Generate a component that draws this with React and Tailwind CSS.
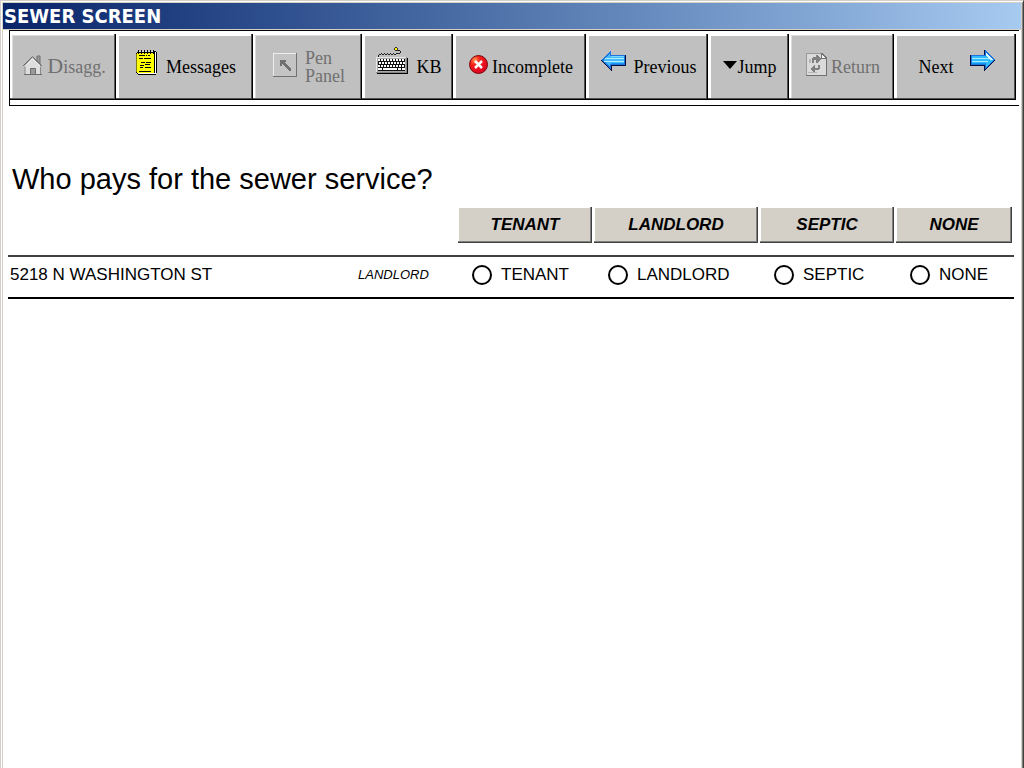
import React, { useState } from "react";

const HouseIcon = () => (
  <svg width="20" height="20" viewBox="0 0 20 20" className="mb-1">
    <path d="M14 7V1h3v9" fill="#9a9a9a" stroke="#6e6e6e" />
    <path d="M2 10L9.500 3L17.500 10V19.500H2z" fill="#dedede" stroke="#8a8a8a" />
    <path d="M0 11L9.500 1.500L19 11" fill="none" stroke="#6e6e6e" />
    <path d="M1.500 11.500L9.500 3.500L17.500 11.500" fill="none" stroke="#f4f4f4" />
    <rect x="7" y="13" width="5" height="6" fill="#9a9a9a" />
    <path d="M7.500 19V13.500H12.500V19M1 19.500H19" fill="none" stroke="#6e6e6e" />
  </svg>
);

const NotepadIcon = () => (
  <svg width="22" height="25" viewBox="0 0 22 25" shapeRendering="crispEdges">
    <path d="M3 1H20V2H21V23H20V25H2V24H1V23H0V3H1V2H3z" fill="#000" />
    <path d="M19 2H20V24H2V23H19z" fill="#fff" />
    <rect x="1" y="3" width="17" height="20" fill="#ff0" />
    <rect x="0" y="4" width="1" height="18" fill="#808000" />
    <path
      d="M2 0h1v4H2zM5 0h1v4H5zM8 0h1v4H8zM11 0h1v4h-1zM14 0h1v4h-1zM17 0h1v4h-1z"
      fill="#000"
    />
    <path
      d="M3 1h2v1H3zM6 1h2v1H6zM9 1h2v1H9zM12 1h2v1h-2zM15 1h2v1h-2z"
      fill="#ddd"
    />
    <path
      d="M3 5h6v1H3zM10 5h1v1h-1zM12 5h2v1h-2zM3 8h4v1H3zM8 8h7v1H8zM5 12h4v1H5zM10 12h5v1h-5zM4 15h4v1H4zM9 14h5v1H9zM4 17h3v1H4zM9 17h6v1H9zM3 21h12v1H3z"
      fill="#000"
    />
  </svg>
);

const CursorIcon = () => (
  <svg width="24" height="24" viewBox="0 0 24 24" shapeRendering="crispEdges" className="mb-1">
    <rect width="24" height="24" fill="#707070" />
    <path d="M0 0H23V1H1V23H0z" fill="#eee" />
    <rect x="1" y="1" width="22" height="22" fill="#c4c4c4" />
    <path d="M7 7H13V9H11L18 16V18H16L9 11V13H7z" fill="#707070" />
  </svg>
);

const KeyboardIcon = () => (
  <svg width="32" height="27" viewBox="0 0 32 27" shapeRendering="crispEdges">
    <path
      d="M2 8h1v2H2zM3 7h2v1H3zM5 6h1v1H5zM6 7h2v1H6zM8 6h1v1H8zM9 7h2v1H9zM11 6h1v1h-1zM12 7h2v1h-2zM14 6h1v1h-1zM15 7h2v1h-2zM17 6h1v1h-1zM18 7h2v1h-2zM20 6h4v1h-4zM24 5h1v1h-1zM24 4h1v1h-1zM21 3h3v1h-3z"
      fill="#222"
    />
    <path d="M19 0h2v1h1v3h-3v-1h-1V1h1z" fill="#333" />
    <path d="M19 1h2v2h-2z" fill="#ff0" />
    <rect x="1" y="11" width="31" height="16" fill="#000" />
    <rect x="0" y="10" width="31" height="16" fill="#888" />
    <path d="M0 10H30V11H1V25H0z" fill="#e8e8e8" />
    <rect x="1" y="11" width="29" height="14" fill="#a8a8a8" />
    <rect x="2" y="12" width="27" height="12" fill="#111" />
    {[12, 15, 18].map((y, i) =>
      [0, 1, 2, 3, 4, 5, 6, 7, 8].map((n) => (
        <rect key={`${y}-${n}`} x={2 + n * 3 + (i % 2)} y={y} width="2" height="2" fill="#fff" />
      ))
    )}
    <path d="M2 21h4v2H2zM7 21h14v2H7zM22 21h3v2h-3zM26 21h3v2h-3z" fill="#fff" />
  </svg>
);

const ErrorIcon = () => (
  <svg width="19" height="19" viewBox="0 0 19 19">
    <defs>
      <radialGradient id="errorFill" cx="30%" cy="25%" r="80%">
        <stop offset="0%" stopColor="#ff9a50" />
        <stop offset="35%" stopColor="#f5201c" />
        <stop offset="100%" stopColor="#dc0022" />
      </radialGradient>
    </defs>
    <circle cx="9.500" cy="9.500" r="9" fill="url(#errorFill)" stroke="#7c0808" />
    <path d="M6 6L13 13M13 6L6 13" stroke="#fff" strokeWidth="2.500" />
  </svg>
);

const PreviousIcon = () => (
  <svg width="25" height="21" viewBox="0 0 25 21" shapeRendering="crispEdges">
    <path d="M0 10L10 0V5H25V16H11V21H10z" fill="#001040" />
    <path d="M0 10L10 0V5H24V15H10V19z" fill="#1c74dc" />
    <path d="M2 10L9 3V6H23V14H9V17z" fill="#44bcfc" />
    <path d="M4 8H23V9H4zM3 11H23V12H3z" fill="#b4ecff" />
    <path d="M10 6H23V7H10z" fill="#78d8ff" />
    <path d="M10 13H23V14H10z" fill="#1894f4" />
  </svg>
);

const NextIcon = () => (
  <svg width="25" height="21" viewBox="0 0 25 21" shapeRendering="crispEdges">
    <path d="M25 10L14 0V5H0V16H14V21z" fill="#001040" />
    <path d="M25 10L15 0V5H1V15H15V19z" fill="#1c74dc" />
    <path d="M23 10L16 3V6H2V14H16V17z" fill="#30bcfc" />
    <path d="M2 8H20V9H2zM2 11H18V12H2z" fill="#a4ecff" />
    <path d="M16 3L23 10H20L16 6z" fill="#d4f8ff" />
    <path d="M2 13H16V14H2z" fill="#1894f4" />
  </svg>
);

const JumpIcon = () => (
  <svg width="14" height="8" viewBox="0 0 14 8" className="mb-1">
    <path d="M0 0H14L7 8z" fill="#000" />
  </svg>
);

const ReturnIcon = () => (
  <svg width="21" height="23" viewBox="0 0 21 23" shapeRendering="crispEdges" className="mb-1">
    <path d="M0 0H16L21 5V23H0z" fill="#707070" />
    <path d="M1 1H15V6H20V22H1z" fill="#dadada" />
    <path d="M0 0H15V1H1V22H0z" fill="#999" />
    <path d="M16 2L19 5H16z" fill="#f5f5f5" />
    <path d="M6 5h1V4h3V2h1l4 4l-4 4h-1V7H8v3H6z" fill="#808080" />
    <path d="M12 12h2v4h-1v1H9v3H8l-4-4l4-4h1v3h3z" fill="#808080" />
    <path d="M3 6h2v4H3zM2 19h9v1H2z" fill="#b5b5b5" />
  </svg>
);

const OPTIONS = ["TENANT", "LANDLORD", "SEPTIC", "NONE"];

const ToolButton = ({ gap, disabled, children }) => (
  <button
    type="button"
    disabled={disabled}
    className={`flex h-[66px] items-center justify-center whitespace-nowrap bg-[#c0c0c0] pb-px pl-[3px] text-[18px] leading-[18px] ${gap} ${
      disabled
        ? "text-[#707070] shadow-[inset_-1px_-1px_0_#000,inset_-2px_-2px_0_#606060,inset_2px_1px_0_#fff,inset_3px_2px_0_#dcdcdc]"
        : "text-black shadow-[inset_-1px_-1px_0_#000,inset_-2px_-2px_0_#505050,inset_3px_2px_0_#fff]"
    }`}
  >
    {children}
  </button>
);

const Toolbar = () => (
  <div className="ml-[6px] mr-[2px] border-y border-l border-black pb-[5px] pr-[3px] pt-[3px] font-['Liberation_Serif',serif]">
    <div className="grid grid-cols-[106fr_137fr_109fr_91fr_133fr_122fr_81fr_105fr_122fr]">
      <ToolButton gap="gap-1" disabled>
        <HouseIcon />
        <span className="first-letter:text-[22px]">Disagg.</span>
      </ToolButton>
      <ToolButton gap="gap-2">
        <span className="mb-2">
          <NotepadIcon />
        </span>
        <span>Messages</span>
      </ToolButton>
      <ToolButton gap="gap-2" disabled>
        <CursorIcon />
        <span className="text-left">
          Pen
          <br />
          Panel
        </span>
      </ToolButton>
      <ToolButton gap="gap-2">
        <span className="mb-3">
          <KeyboardIcon />
        </span>
        <span>KB</span>
      </ToolButton>
      <ToolButton gap="gap-1">
        <span className="mb-1">
          <ErrorIcon />
        </span>
        <span>Incomplete</span>
      </ToolButton>
      <ToolButton gap="gap-2">
        <span className="mb-3">
          <PreviousIcon />
        </span>
        <span>Previous</span>
      </ToolButton>
      <ToolButton gap="gap-0">
        <JumpIcon />
        <span>Jump</span>
      </ToolButton>
      <ToolButton gap="gap-1" disabled>
        <ReturnIcon />
        <span>Return</span>
      </ToolButton>
      <ToolButton gap="gap-4">
        <span>Next</span>
        <span className="mb-3">
          <NextIcon />
        </span>
      </ToolButton>
    </div>
  </div>
);

const App = () => {
  const [payer, setPayer] = useState("");

  return (
    <div className="min-h-screen border-l border-r border-t border-[#d4d0c8] border-r-[#404040] bg-white font-['Liberation_Sans',sans-serif] text-black">
      <div className="ml-px mt-px min-h-[calc(100vh-2px)] border-l border-r border-t border-[#d4d0c8] border-r-[#808080]">
        <div className="min-h-[calc(100vh-3px)] border-r border-[#d4d0c8]">
          {/* title bar */}
          <header className="flex h-[27px] items-center border-b border-[#d4d0c8] bg-linear-to-r from-[#0a246a] to-[#a6caf0] pl-px">
            <h1 className="font-['DejaVu_Sans_Condensed','DejaVu_Sans',sans-serif] text-[20px] font-bold leading-[26px] text-white">
              SEWER SCREEN
            </h1>
          </header>

          <Toolbar />

          <main className="ml-[5px] mr-[7px] pt-[57px]">
            <h2 id="question" className="pl-1 text-[29px] leading-[32px]">
              Who pays for the sewer service?
            </h2>

            <table className="mt-3 w-full table-fixed border-collapse" aria-labelledby="question">
              <colgroup>
                <col />
                <col className="w-[100px]" />
                <col className="w-[136px]" />
                <col className="w-[166px]" />
                <col className="w-[136px]" />
                <col className="w-[118px]" />
              </colgroup>
              <thead>
                <tr className="border-b-2 border-[#404040]">
                  <td colSpan={2} />
                  {OPTIONS.map((option) => (
                    <th key={option} className="p-0 pb-3 pr-[2px]">
                      <button
                        type="button"
                        onClick={() => setPayer(option)}
                        className="block h-9 w-full bg-[#d4d0c8] text-[17px] font-bold italic leading-[20px] shadow-[inset_-1px_-1px_0_#404040,inset_-2px_-2px_0_#808080,inset_1px_1px_0_#fff]"
                      >
                        {option}
                      </button>
                    </th>
                  ))}
                </tr>
              </thead>
              <tbody>
                <tr className="h-[42px] border-b-2 border-black">
                  <th scope="row" className="p-0 pb-1 pl-[2px] text-left text-[17px] font-normal leading-[20px]">
                    5218 N WASHINGTON ST
                  </th>
                  <td className="p-0 pb-1 text-[13px] italic leading-[20px]">LANDLORD</td>
                  {OPTIONS.map((option) => (
                    <td key={option} className="p-0 pb-1 pl-[14px]">
                      <label className="flex items-center gap-[9px] text-[17px] leading-[20px]">
                        <input
                          type="radio"
                          name="payer"
                          value={option}
                          checked={payer === option}
                          onChange={() => setPayer(option)}
                          className="size-5 shrink-0 appearance-none rounded-full border-2 border-black checked:bg-black checked:shadow-[inset_0_0_0_3px_#fff]"
                        />
                        {option}
                      </label>
                    </td>
                  ))}
                </tr>
              </tbody>
            </table>
          </main>
        </div>
      </div>
    </div>
  );
};

export default App;
